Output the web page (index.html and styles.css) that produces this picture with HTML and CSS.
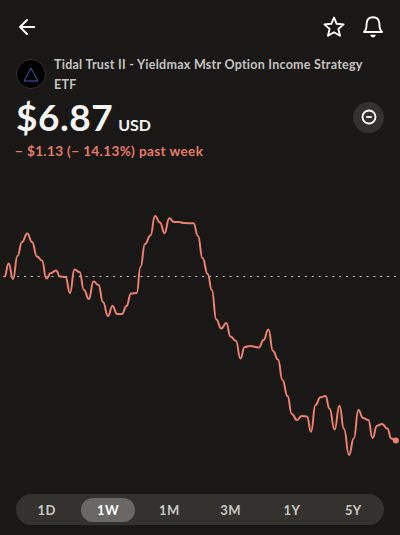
FILE: index.html
```html
<!DOCTYPE html>
<html lang="en">
<head>
  <meta charset="UTF-8">
  <meta name="viewport" content="width=device-width, initial-scale=1.0">
  <title>Tidal Trust II - Yieldmax Mstr Option Income Strategy ETF</title>
  <link rel="stylesheet" href="styles.css">
</head>
<body>
  <header class="topbar">
    <button class="icon-btn" aria-label="Back">
      <svg width="16" height="16" viewBox="0 0 16 16"><path d="M15.2 8H1.2M8 1L1 8l7 7"/></svg>
    </button>
    <div class="actions">
      <button class="icon-btn" aria-label="Watch">
        <svg width="22" height="22" viewBox="0 0 22 22"><path d="M11 1.5l2.700 6.300 6.900.6-5.200 4.500 1.600 6.900-6-3.600-6 3.600 1.600-6.900-5.200-4.500 6.900-.6z"/></svg>
      </button>
      <button class="icon-btn" aria-label="Alerts">
        <svg width="20" height="22" viewBox="0 0 20 22"><path d="M1 16h18c-1.700-1.300-2.300-2.600-2.400-5l-.2-3.500C16.100 3.500 13.600 1.200 10 1.200S3.900 3.500 3.600 7.500L3.400 11c-.1 2.400-.7 3.700-2.400 5z"/><path class="fill" d="M7.200 18.700h5.600c-.4 1.700-1.400 2.600-2.800 2.600s-2.400-.9-2.800-2.600z"/></svg>
      </button>
    </div>
  </header>

  <main>
    <section class="security">
      <div class="logo">
        <svg width="16" height="15" viewBox="0 0 16 15"><path d="M8 1.200L15 14H1z"/></svg>
      </div>
      <h1><span class="name">Tidal Trust II - Yieldmax Mstr Option Income Strategy</span> <span class="kind">ETF</span></h1>
    </section>

    <section class="quote">
      <div class="price"><span class="amount">$6.87</span><span class="currency">USD</span></div>
      <button class="status" aria-label="Market closed">
        <svg width="16" height="16" viewBox="0 0 16 16"><circle cx="8" cy="8" r="6.500"/><path d="M5.200 8h5.600"/></svg>
      </button>
    </section>
    <p class="change">− $1.13 (− 14.13%) past week</p>

    <svg class="chart" width="400" height="300" viewBox="0 180 400 300">
      <path class="baseline" d="M3.500 276.500H400"/>
      <path class="line" id="line"/>
      <circle class="dot" cx="395.800" cy="440.500" r="3"/>
    </svg>
  </main>

  <nav class="ranges">
    <button>1D</button>
    <button class="active">1W</button>
    <button>1M</button>
    <button>3M</button>
    <button>1Y</button>
    <button>5Y</button>
  </nav>

  <script>
    const points = [
      [4.5, 276.5], [8.7, 263.5], [13, 279], [17.5, 256], [22, 242], [27.3, 233.5], [32, 242], [37, 256.5],
      [42, 260.5], [46.3, 278.5], [51, 273], [56, 270.5], [60, 276.5], [65.5, 277], [70, 293], [74.5, 269.5],
      [79.5, 272], [84, 290], [88.8, 299], [93.5, 281.5], [98.5, 285], [103, 302], [108, 316], [112.5, 306],
      [117, 314], [122, 314], [126.5, 306], [131, 293.5], [136.7, 293], [140.5, 267], [145, 244], [150.5, 235.5],
      [155, 216], [160, 222.5], [164.5, 233], [169.3, 218.3], [174, 222], [179, 222], [184, 223], [193.5, 223.3],
      [198, 236], [202.5, 258], [207.7, 274], [211.8, 290], [216.3, 319.5], [221.3, 328.5], [226.3, 323], [230.5, 336.5],
      [236, 341], [240.4, 358.5], [244.7, 347], [250, 346], [259, 347.5], [263.5, 340], [268.4, 329.5], [273, 351],
      [278, 359.5], [282.5, 380], [287.5, 396], [291.8, 414], [297, 420], [301.7, 416], [307, 416.5], [311, 431.7],
      [315.5, 405], [320.5, 397.3], [325.5, 396], [329.5, 408.5], [334.6, 429.5], [339.4, 405.8], [344, 429], [349, 455],
      [353.8, 438.5], [358.4, 410], [363, 418], [368.3, 420], [372.6, 438], [377, 425.7], [382, 424], [387.3, 428.5],
      [391.3, 438.5], [395.8, 440.5]
    ];

    // each step leaves and enters its point horizontally
    let d = `M${points[0]}`;
    for (let i = 1; i < points.length; i++) {
      const [x0, y0] = points[i - 1];
      const [x1, y1] = points[i];
      const mid = (x0 + x1) / 2;
      d += `C${mid} ${y0} ${mid} ${y1} ${x1} ${y1}`;
    }
    document.getElementById('line').setAttribute('d', d);
  </script>
</body>
</html>
```

FILE: styles.css
```css
* {
  box-sizing: border-box;
}

body {
  margin: 0;
  height: 535px;
  overflow: hidden;
  display: flex;
  flex-direction: column;
  background: #191816;
  color: #f5f4f2;
  font-family: Lato, "Liberation Sans", sans-serif;
}

button {
  padding: 0;
  border: none;
  background: none;
  color: inherit;
  font: inherit;
  cursor: pointer;
}

svg {
  display: block;
  fill: none;
  stroke: currentColor;
}

.topbar {
  height: 54px;
  padding: 0 17px 0 19px;
  display: flex;
  justify-content: space-between;
  align-items: center;
}

.icon-btn svg {
  stroke: #fff;
  stroke-width: 1.9;
  stroke-linejoin: round;
  stroke-linecap: round;
}

.icon-btn .fill {
  fill: #fff;
  stroke: none;
}

.actions {
  display: flex;
  align-items: center;
  gap: 18px;
}

.security {
  display: flex;
  align-items: center;
  gap: 8px;
  height: 40px;
  padding-left: 16px;
}

.logo {
  width: 30px;
  height: 30px;
  display: flex;
  align-items: center;
  justify-content: center;
  border: 1px solid #343332;
  border-radius: 50%;
  background: #000;
  color: #3d62b8;
}

.security h1 {
  margin: 0;
  padding-top: 2px;
  color: #c5c3c0;
  font-size: 12.5px;
  font-weight: 700;
  letter-spacing: 0.26px;
  line-height: 20px;
}

.security h1 span {
  display: block;
  white-space: nowrap;
}

.quote {
  height: 46px;
  padding: 0 16px;
  display: flex;
  justify-content: space-between;
  align-items: center;
}

.price {
  display: flex;
  align-items: baseline;
  gap: 5px;
}

.amount {
  font-size: 37px;
  font-weight: 700;
  letter-spacing: 0.5px;
  line-height: 46px;
}

.currency {
  font-size: 16px;
  font-weight: 700;
}

.status {
  width: 31px;
  height: 31px;
  display: flex;
  align-items: center;
  justify-content: center;
  border-radius: 50%;
  background: #323130;
  color: #fff;
}

.status svg {
  stroke-width: 1.8;
}

.change {
  margin: 0;
  height: 40px;
  padding: 1px 15px 0;
  color: #e77b69;
  font-size: 13.5px;
  font-weight: 700;
  letter-spacing: 0.4px;
  line-height: 20px;
}

.chart .baseline {
  stroke: #c9c8c6;
  stroke-width: 1;
  stroke-dasharray: 2 4.85;
}

.chart .line {
  stroke: #ed806e;
  stroke-width: 2;
  stroke-linejoin: round;
  stroke-linecap: round;
}

.chart .dot {
  fill: #ed806e;
  stroke: none;
}

.ranges {
  height: 31px;
  margin: 14px 16px 0;
  display: flex;
  align-items: center;
  border-radius: 16px;
  background: #33322f;
}

.ranges button {
  flex: 1;
  height: 24px;
  margin: 0 3.7px;
  border-radius: 12px;
  color: #c9c7c4;
  font-size: 13px;
  font-weight: 700;
  letter-spacing: 0.4px;
}

.ranges .active {
  background: #696867;
  color: #fff;
}
```
